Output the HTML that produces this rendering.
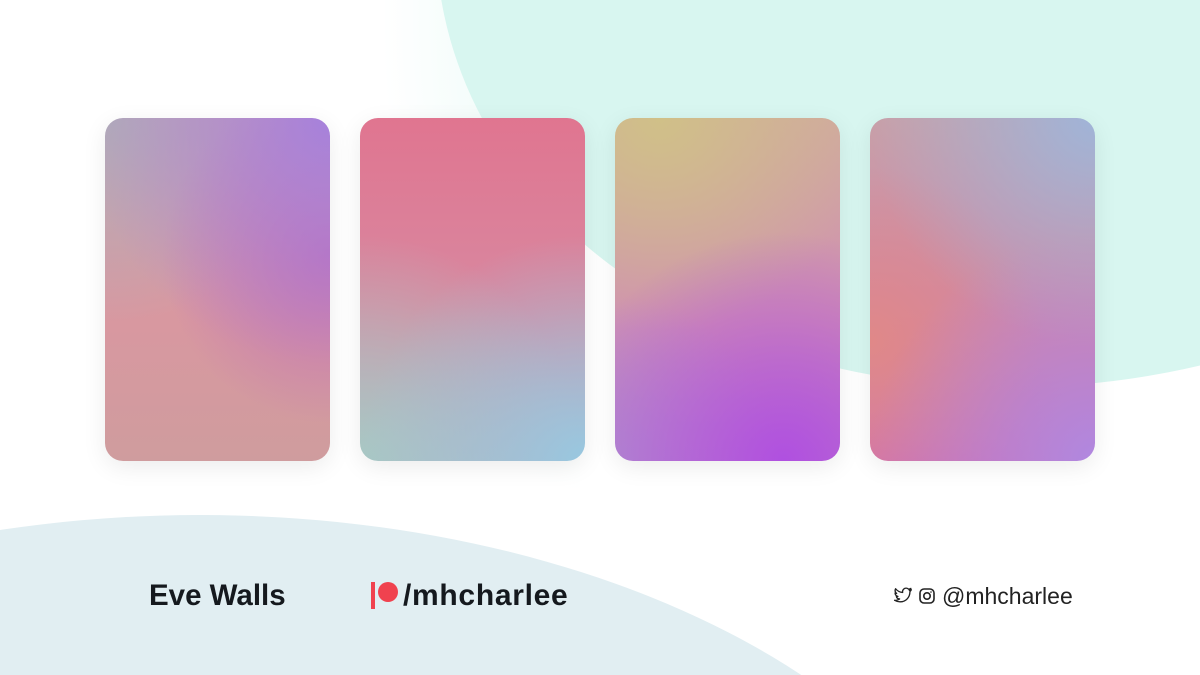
<!DOCTYPE html>
<html style="width:1200px;height:675px;overflow:hidden"><head><style>
html,body{margin:0;width:1200px;height:675px;overflow:hidden}
body{position:relative;background:#fff;font-family:"Liberation Sans",sans-serif}
#w{position:absolute;left:0;top:0;width:1200px;height:675px;overflow:hidden}
.blob{position:absolute}
.c{position:absolute;top:118px;width:225px;height:343px;border-radius:18px;box-shadow:0 6px 24px rgba(0,0,0,0.08);overflow:hidden}
.t{position:absolute;font-weight:bold;color:#15191e}
</style></head><body><div id="w">
<div class="blob" style="left:430px;top:-620px;width:1300px;height:1000px;border-radius:50%;background:#d8f6f0;transform:rotate(-12deg)"></div>
<div class="blob" style="left:380px;top:-200px;width:200px;height:700px;background:radial-gradient(ellipse at 100% 30%,rgba(216,246,240,0.6),rgba(255,255,255,0) 70%)"></div>
<div class="blob" style="left:-610px;top:515px;width:1620px;height:970px;border-radius:50%;background:#e1eef2"></div>
<div class="blob" style="left:700px;top:440px;width:500px;height:235px;background:radial-gradient(ellipse at 60% 50%,rgba(255,255,255,0.9),rgba(255,255,255,0) 70%)"></div>

<div class="c" style="left:105px;background:radial-gradient(circle at 100% 0%,#a681dc 0%,rgba(166,129,220,0) 60%),radial-gradient(circle at 100% 40%,#c070b8,rgba(192,112,184,0) 55%),radial-gradient(circle at 0% 0%,#b0acb8,rgba(176,172,184,0) 50%),linear-gradient(#d4a0a8,#d898a0 60%,#cf9c9e)"></div>
<div class="c" style="left:360px;background:radial-gradient(circle at 100% 100%,#98c8e0,rgba(152,200,224,0) 55%),radial-gradient(circle at 0% 100%,#a8c8c4,rgba(168,200,196,0) 55%),linear-gradient(#e07590,#d888a0 55%,#c0a4b8)"></div>
<div class="c" style="left:615px;background:radial-gradient(circle at 75% 100%,#b050e0,rgba(176,80,224,0) 60%),radial-gradient(circle at 0% 100%,#b090cc,rgba(176,144,204,0) 40%),radial-gradient(circle at 20% 0%,#d0c088,rgba(208,192,136,0) 55%),linear-gradient(#d0a8a0,#d090b0 60%,#c080c0)"></div>
<div class="c" style="left:870px;background:radial-gradient(circle at 100% 0%,#a0b4d8,rgba(160,180,216,0) 55%),radial-gradient(circle at 100% 100%,#b088e0,rgba(176,136,224,0) 55%),radial-gradient(circle at 0% 65%,#e08888,rgba(224,136,136,0) 55%),linear-gradient(#c8a0a8,#d080a8 70%,#d070b0)"></div>

<div class="t" style="left:149px;top:579px;font-size:29.5px">Eve Walls</div>
<div style="position:absolute;left:371px;top:582px;width:4px;height:27px;background:#f0424f"></div>
<div style="position:absolute;left:378px;top:582px;width:20px;height:20px;border-radius:50%;background:#f0424f"></div>
<div class="t" style="left:403px;top:579px;font-size:30px;letter-spacing:0.7px">/mhcharlee</div>

<svg style="position:absolute;left:893px;top:587px" width="20" height="18" viewBox="0 0 24 20"><path d="M22 2.5c-.8.4-1.6.6-2.4.7.9-.5 1.5-1.3 1.8-2.3-.8.5-1.7.8-2.6 1-1.6-1.7-4.3-1.8-6-.2-1.1 1-1.5 2.5-1.2 4C8.3 5.5 5.2 3.9 3.1 1.3 2 3.2 2.5 5.7 4.4 6.9c-.7 0-1.3-.2-1.9-.5 0 2 1.4 3.7 3.4 4.1-.6.2-1.3.2-1.9.1.5 1.7 2.1 2.9 3.9 2.9-1.7 1.3-3.9 2-6 1.7C4 16.4 6.3 17 8.5 17c7.6 0 11.8-6.3 11.8-11.8v-.5c.7-.6 1.3-1.3 1.7-2.2z" fill="none" stroke="#222" stroke-width="1.6" stroke-linejoin="round"/></svg>
<svg style="position:absolute;left:919px;top:588px" width="16" height="16" viewBox="0 0 16 16"><rect x="1" y="1" width="14" height="14" rx="4" fill="none" stroke="#222" stroke-width="1.6"/><circle cx="8" cy="8" r="3.2" fill="none" stroke="#222" stroke-width="1.6"/><circle cx="12" cy="4" r="0.8" fill="#222"/></svg>
<div style="position:absolute;left:942px;top:583px;font-size:23px;color:#222">@mhcharlee</div>
</div></body></html>
